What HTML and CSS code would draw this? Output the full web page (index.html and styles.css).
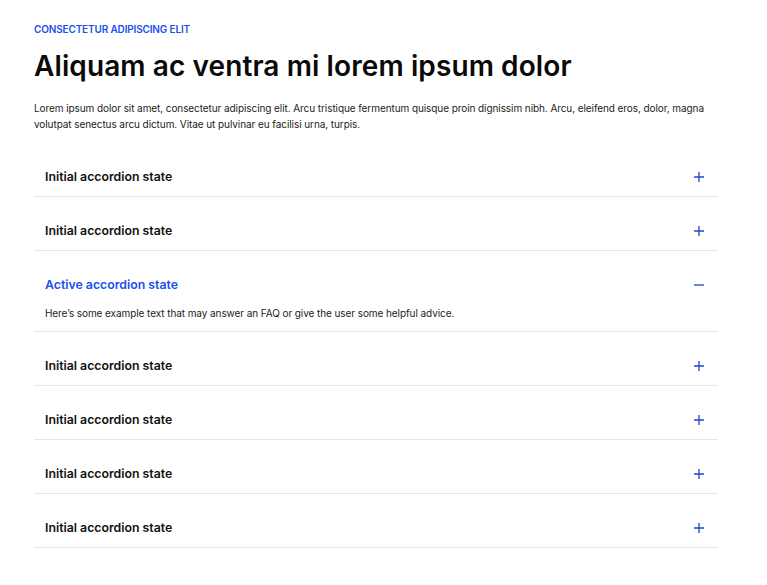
FILE: index.html
```html
<!DOCTYPE html>
<html lang="en">
<head>
<meta charset="utf-8">
<title>FAQ</title>
<link rel="stylesheet" href="styles.css">
</head>
<body>
<main class="page">
  <p class="eyebrow">Consectetur adipiscing elit</p>
  <h1 class="title">Aliquam ac ventra mi lorem ipsum dolor</h1>
  <p class="lead">Lorem ipsum dolor sit amet, consectetur adipiscing elit. Arcu tristique fermentum quisque proin dignissim nibh. Arcu, eleifend eros, dolor, magna volutpat senectus arcu dictum. Vitae ut pulvinar eu facilisi urna, turpis.</p>
  <div class="accordion">
    <div class="item">
      <div class="head"><span class="label">Initial accordion state</span><svg class="icon" viewBox="0 0 10 10"><path d="M0 5H10M5 0V10"/></svg></div>
    </div>
    <div class="item">
      <div class="head"><span class="label">Initial accordion state</span><svg class="icon" viewBox="0 0 10 10"><path d="M0 5H10M5 0V10"/></svg></div>
    </div>
    <div class="item active">
      <div class="head"><span class="label">Active accordion state</span><svg class="icon" viewBox="0 0 10 10"><path d="M0 5H10"/></svg></div>
      <p class="answer">Here’s some example text that may answer an FAQ or give the user some helpful advice.</p>
    </div>
    <div class="item">
      <div class="head"><span class="label">Initial accordion state</span><svg class="icon" viewBox="0 0 10 10"><path d="M0 5H10M5 0V10"/></svg></div>
    </div>
    <div class="item">
      <div class="head"><span class="label">Initial accordion state</span><svg class="icon" viewBox="0 0 10 10"><path d="M0 5H10M5 0V10"/></svg></div>
    </div>
    <div class="item">
      <div class="head"><span class="label">Initial accordion state</span><svg class="icon" viewBox="0 0 10 10"><path d="M0 5H10M5 0V10"/></svg></div>
    </div>
    <div class="item">
      <div class="head"><span class="label">Initial accordion state</span><svg class="icon" viewBox="0 0 10 10"><path d="M0 5H10M5 0V10"/></svg></div>
    </div>
  </div>
</main>
</body>
</html>
```
FILE: styles.css
```css
* { box-sizing: border-box; }
html, body { margin: 0; background: #fff; }
body {
  font-family: Inter, "Noto Sans", Arial, sans-serif;
  color: #111;
}
.page {
  width: 684px;
  margin-left: 34px;
  padding-top: 22px;
}
.eyebrow {
  margin: 0;
  font-size: 10px;
  line-height: 14px;
  font-weight: 600;
  text-transform: uppercase;
  color: #1a4ff0;
  letter-spacing: -0.15px;
}
.title {
  margin: 13px 0 0;
  font-size: 28px;
  line-height: 34px;
  font-weight: 600;
  color: #0a0a0a;
  letter-spacing: 0.1px;
}
.lead {
  margin: 17px 0 0;
  font-size: 10px;
  line-height: 16px;
  color: #222;
  letter-spacing: -0.08px;
}
.accordion {
  margin-top: 11px;
}
.item {
  padding: 26px 14px 11px 11px;
  border-bottom: 1px solid #e2e8f0;
}
.head {
  display: flex;
  align-items: center;
  justify-content: space-between;
  height: 16px;
}
.label {
  font-size: 12.3px;
  line-height: 16px;
  font-weight: 600;
  color: #111;
}
.icon {
  width: 10px;
  height: 10px;
  fill: none;
  stroke: #1d45d0;
  stroke-width: 1.3;
}
.active { padding-bottom: 10px; }
.active .label { color: #1a4ff0; }
.answer {
  margin: 12px 0 0;
  font-size: 10px;
  line-height: 16px;
  color: #222;
  letter-spacing: -0.08px;
}
```
